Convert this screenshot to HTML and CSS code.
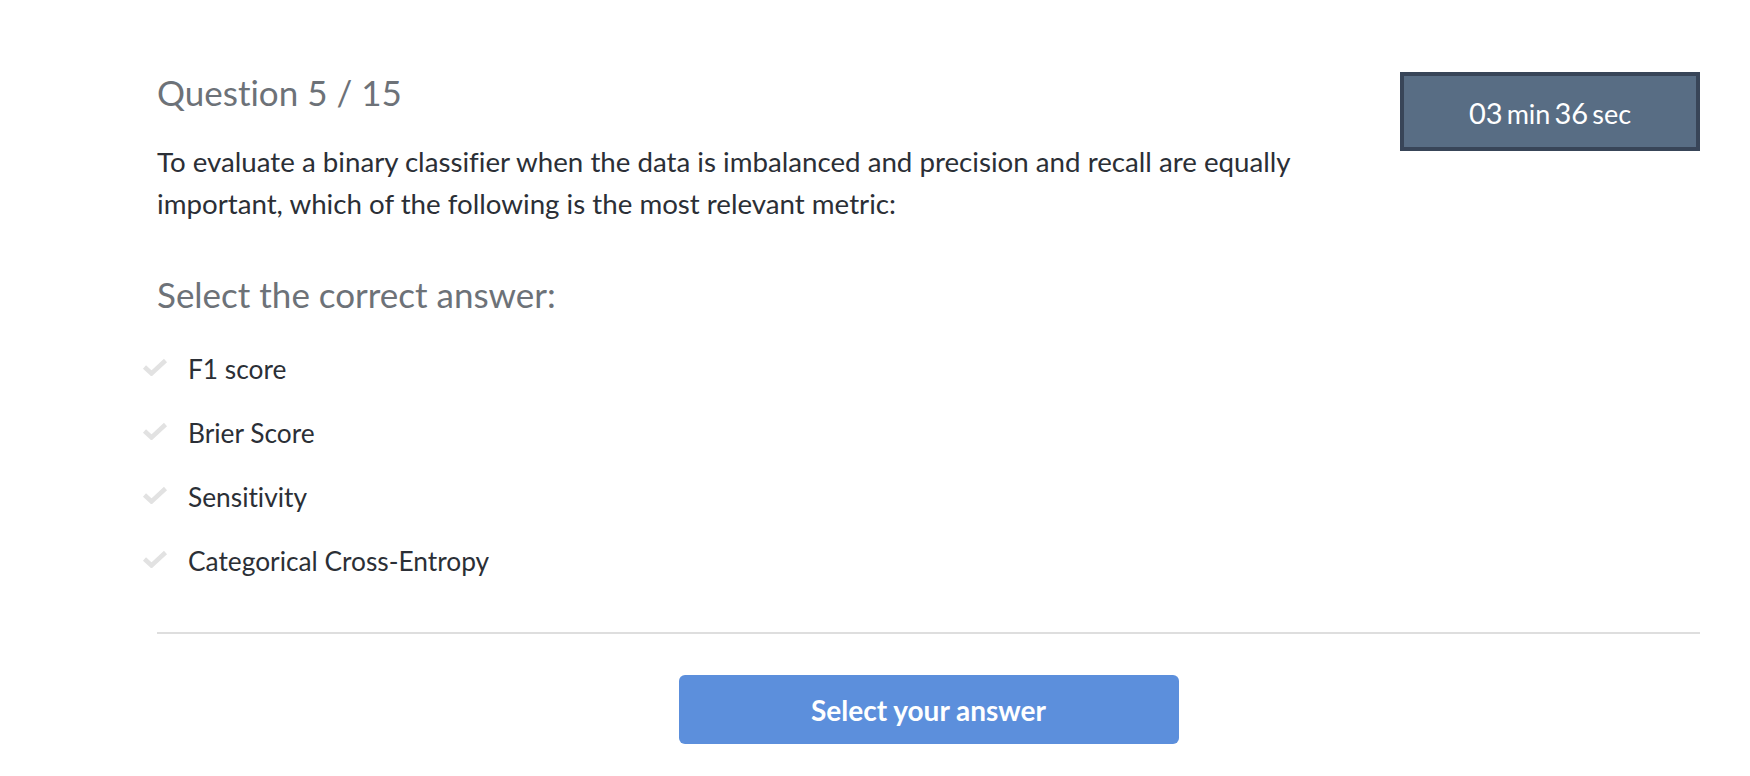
FILE: index.html
```html
<!DOCTYPE html>
<html lang="en">
<head>
<meta charset="utf-8">
<title>Question 5 / 15</title>
<link rel="stylesheet" href="styles.css">
</head>
<body>
<main class="page">
  <div class="top">
    <section class="question">
      <h1 class="q-title">Question 5 / 15</h1>
      <p class="q-text">To evaluate a binary classifier when the data is imbalanced and precision and recall are equally important, which of the following is the most relevant metric:</p>
    </section>
    <div class="timer"><span class="num">03</span> <span class="unit">min</span> <span class="num">36</span> <span class="unit">sec</span></div>
  </div>
  <h2 class="prompt">Select the correct answer:</h2>
  <ul class="options">
    <li class="option"><svg class="check" viewBox="0 0 26 18"><polyline points="2.5,9 9.5,15.5 23.5,2.5"/></svg><span>F1 score</span></li>
    <li class="option"><svg class="check" viewBox="0 0 26 18"><polyline points="2.5,9 9.5,15.5 23.5,2.5"/></svg><span>Brier Score</span></li>
    <li class="option"><svg class="check" viewBox="0 0 26 18"><polyline points="2.5,9 9.5,15.5 23.5,2.5"/></svg><span>Sensitivity</span></li>
    <li class="option"><svg class="check" viewBox="0 0 26 18"><polyline points="2.5,9 9.5,15.5 23.5,2.5"/></svg><span>Categorical Cross-Entropy</span></li>
  </ul>
  <hr class="rule">
  <div class="actions">
    <button class="submit" type="button">Select your answer</button>
  </div>
</main>
</body>
</html>
```

FILE: styles.css
```css
html, body {
  margin: 0;
  padding: 0;
  background: #ffffff;
}

body {
  font-family: Lato, "Open Sans", "Liberation Sans", sans-serif;
  color: #2b2f36;
  font-variant-ligatures: no-common-ligatures;
}

.page {
  width: 1543px;
  margin-left: 157px;
  padding-top: 70px;
}

.top {
  display: flex;
  justify-content: space-between;
  align-items: flex-start;
}

.question {
  width: 1170px;
}

.q-title {
  margin: 0;
  font-size: 35px;
  line-height: 44px;
  font-weight: 400;
  color: #6d7278;
}

.q-text {
  margin: 27px 0 0;
  font-size: 27.7px;
  line-height: 42px;
  color: #2b2f36;
}

.timer {
  box-sizing: border-box;
  width: 300px;
  height: 79px;
  margin-top: 2px;
  background: #586d84;
  border: 4px solid #384558;
  color: #ffffff;
  text-align: center;
  padding-top: 20px;
  line-height: 34px;
  white-space: nowrap;
}

.timer .num {
  font-size: 29px;
}

.timer .unit {
  font-size: 27px;
}

.prompt {
  margin: 47px 0 0;
  font-size: 35px;
  line-height: 44px;
  font-weight: 400;
  color: #6d7278;
}

.options {
  list-style: none;
  margin: 21px 0 0;
  padding: 0;
}

.option {
  display: flex;
  align-items: center;
  height: 64px;
  margin-left: -15px;
  font-size: 26.3px;
  gap: 20px;
}

.option span {
  line-height: 64px;
}

.check {
  width: 26px;
  height: 18px;
  flex: none;
  margin-top: -4px;
}

.check polyline {
  fill: none;
  stroke: #e2e2e2;
  stroke-width: 4.5;
  stroke-linecap: butt;
  stroke-linejoin: miter;
}

.rule {
  margin: 39px 0 0;
  border: 0;
  height: 2px;
  background: #dedede;
}

.actions {
  display: flex;
  justify-content: center;
  padding-top: 41px;
}

.submit {
  width: 500px;
  height: 69px;
  border: 0;
  border-radius: 6px;
  background: #5c8fdc;
  color: #ffffff;
  font-family: Lato, "Open Sans", sans-serif;
  font-size: 28px;
  font-weight: 700;
  cursor: pointer;
}
```
